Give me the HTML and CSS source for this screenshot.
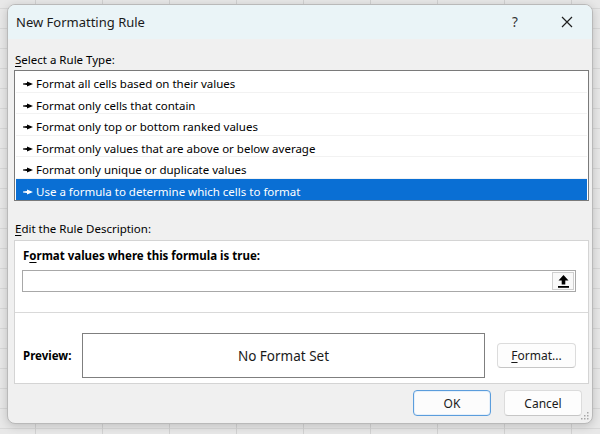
FILE: index.html
```html
<!DOCTYPE html>
<html>
<head>
<meta charset="utf-8">
<link rel="stylesheet" href="styles.css">
</head>
<body>
<div class="dialog">
  <div class="titlebar">
    <span class="title">New Formatting Rule</span>
    <span class="help">?</span>
    <span class="close"><svg width="12" height="12" viewBox="0 0 12 12"><path d="M1 1L11 11M11 1L1 11" stroke="#1f1f1f" stroke-width="1.2" fill="none"/></svg></span>
  </div>
  <div class="content">
    <div class="label"><u>S</u>elect a Rule Type:</div>
    <ul class="list">
      <li class="row"><svg class="ptr" width="10" height="6" viewBox="0 0 10 6"><polygon points="0,2.4 4,2.1 4,0.4 10,3 4,5.6 4,3.9 0,3.6"/></svg>Format all cells based on their values</li>
      <li class="row"><svg class="ptr" width="10" height="6" viewBox="0 0 10 6"><polygon points="0,2.4 4,2.1 4,0.4 10,3 4,5.6 4,3.9 0,3.6"/></svg>Format only cells that contain</li>
      <li class="row"><svg class="ptr" width="10" height="6" viewBox="0 0 10 6"><polygon points="0,2.4 4,2.1 4,0.4 10,3 4,5.6 4,3.9 0,3.6"/></svg>Format only top or bottom ranked values</li>
      <li class="row"><svg class="ptr" width="10" height="6" viewBox="0 0 10 6"><polygon points="0,2.4 4,2.1 4,0.4 10,3 4,5.6 4,3.9 0,3.6"/></svg>Format only values that are above or below average</li>
      <li class="row"><svg class="ptr" width="10" height="6" viewBox="0 0 10 6"><polygon points="0,2.4 4,2.1 4,0.4 10,3 4,5.6 4,3.9 0,3.6"/></svg>Format only unique or duplicate values</li>
      <li class="row selected"><svg class="ptr" width="10" height="6" viewBox="0 0 10 6"><polygon points="0,2.4 4,2.1 4,0.4 10,3 4,5.6 4,3.9 0,3.6"/></svg>Use a formula to determine which cells to format</li>
    </ul>
    <div class="label label-edit"><u>E</u>dit the Rule Description:</div>
    <div class="panel">
      <div class="formula">
        <div class="bold flabel">F<u>o</u>rmat values where this formula is true:</div>
        <div class="input">
          <span class="refbtn"><svg width="11" height="13" viewBox="0 0 11 13"><polygon points="5.5,0 10.5,5.5 7.3,5.5 7.3,9.5 3.7,9.5 3.7,5.5 0.5,5.5" fill="#000"/><rect x="0" y="11" width="11" height="1.8" fill="#000"/></svg></span>
        </div>
      </div>
      <div class="previewrow">
        <span class="bold plabel">Preview:</span>
        <div class="previewbox">No Format Set</div>
        <div class="btn fmt"><u>F</u>ormat...</div>
      </div>
    </div>
    <div class="footer">
      <div class="btn ok">OK</div>
      <div class="btn">Cancel</div>
    </div>
  </div>
  <svg class="grip" width="8" height="8" viewBox="0 0 8 8"><g fill="#a8a8a8"><rect x="6" y="0" width="1.5" height="1.5"/><rect x="3" y="3" width="1.5" height="1.5"/><rect x="6" y="3" width="1.5" height="1.5"/><rect x="0" y="6" width="1.5" height="1.5"/><rect x="3" y="6" width="1.5" height="1.5"/><rect x="6" y="6" width="1.5" height="1.5"/></g></svg>
</div>
</body>
</html>
```
FILE: styles.css
```css
* { box-sizing: border-box; }
html, body { height: 100%; }
body {
  margin: 0;
  overflow: hidden;
  font-family: "Noto Sans", "Open Sans", sans-serif;
  font-size: 11.5px;
  color: #000;
  background-color: #e8e8e8;
  background-image:
    linear-gradient(90deg, #d2d2d2 1px, transparent 1px),
    linear-gradient(#d8d8d8 1px, transparent 1px);
  background-size: 67px 20px, 67px 20px;
  background-position: 35px 0, 0 8px;
}
.dialog {
  position: relative;
  margin: 4px 0 0 7px;
  width: 586px;
  height: 420px;
  background: #f0f0f0;
  border: 1px solid #b9b9b9;
  border-radius: 8px;
  overflow: hidden;
  box-shadow: 0 2px 10px rgba(0,0,0,0.18);
  display: flex;
  flex-direction: column;
}
.titlebar {
  height: 34px;
  flex: none;
  background: #eaf4f7;
  display: flex;
  align-items: center;
  padding-left: 8px;
}
.title {
  font-size: 13px;
  color: #1a1a1a;
  flex: 1;
}
.help {
  font-size: 13.5px;
  color: #333;
  width: 14px;
  text-align: center;
  margin-right: 39px;
}
.close {
  display: flex;
  margin-right: 19px;
}
.content {
  flex: 1;
  display: flex;
  flex-direction: column;
  padding: 13px 3px 0 6px;
}
.label {
  height: 16px;
  line-height: 16px;
  padding-left: 1px;
}
.label u, .bold u, .btn u { text-decoration-thickness: 1px; text-underline-offset: 2px; }
.list {
  list-style: none;
  margin: 2px 0 0 0;
  padding: 0 1px;
  height: 131px;
  background: #fff;
  border: 1px solid #7a7a7a;
}
.row {
  height: 21.5px;
  display: flex;
  align-items: center;
  padding-left: 7px;
  padding-top: 5px;
  border-bottom: 1px solid #f2f2f2;
  white-space: nowrap;
}
.row:last-child { border-bottom: none; }
.ptr { fill: #000; margin-right: 3px; flex: none; margin-top: 1px; }
.row.selected { background: #0a6fd4; color: #fff; }
.row.selected .ptr { fill: #fff; }
.label-edit { margin-top: 20px; }
.panel {
  margin-top: 3px;
  height: 144px;
  background: #fff;
  border: 1px solid #d4d4d4;
  display: flex;
  flex-direction: column;
}
.formula {
  padding: 7px 12px 20px 7px;
  border-bottom: 1px solid #d9d9d9;
}
.bold { font-weight: 700; }
.flabel { height: 16px; line-height: 16px; padding-left: 1px; }
.input {
  margin-top: 6px;
  height: 22px;
  border: 1px solid #a8a8a8;
  background: #fff;
  display: flex;
  justify-content: flex-end;
  padding: 1px;
}
.refbtn {
  width: 22px;
  height: 18px;
  border: 1px solid #cfcfcf;
  background: #f9f9f9;
  display: flex;
  align-items: center;
  justify-content: center;
}
.previewrow {
  flex: 1;
  display: flex;
  align-items: center;
  padding: 20px 12px 5px 8px;
}
.plabel { width: 59px; flex: none; }
.previewbox {
  flex: 1;
  height: 45px;
  border: 1px solid #7f7f7f;
  display: flex;
  align-items: center;
  justify-content: center;
  font-size: 13.5px;
  color: #1a1a1a;
}
.btn {
  width: 78px;
  height: 26px;
  border: 1px solid #dcdcdc;
  border-bottom-color: #c6c6c6;
  border-radius: 4px;
  background: #fdfdfd;
  display: flex;
  align-items: center;
  justify-content: center;
  color: #1a1a1a;
  font-size: 12px;
}
.fmt { width: 79px; height: 25px; margin-left: 12px; flex: none; }
.footer {
  display: flex;
  justify-content: flex-end;
  gap: 13px;
  padding: 6px 7px 0 0;
}
.ok {
  border: 1px solid #5b9ddc;
  box-shadow: inset 0 0 0 1px #e6f0fa;
  background: #fcfcfc;
}
.grip {
  position: absolute;
  right: 3px;
  bottom: 3px;
}
```
